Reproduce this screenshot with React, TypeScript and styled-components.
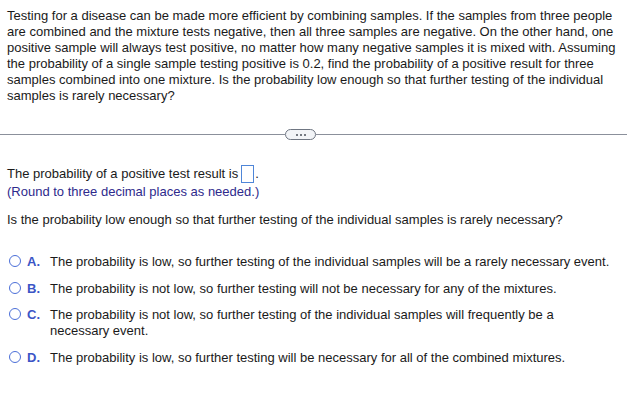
import React from "react";
import styled, { createGlobalStyle } from "styled-components";

const Global = createGlobalStyle`
  html, body { margin: 0; padding: 0; background: #ffffff; }
  body { font-family: "Liberation Sans", Arial, sans-serif; font-size: 13px; color: #1a1a1a; }
`;

const Page = styled.div`
  padding: 8px 7px 0 7px;
  width: 627px;
  box-sizing: border-box;
`;

const Para = styled.p`
  margin: 0;
  line-height: 16px;
  width: 610px;
`;

const DividerRow = styled.div`
  display: flex;
  align-items: center;
  margin: 25px -7px 0 -7px;
  height: 11px;
`;

const Line = styled.div<{ $w?: number }>`
  flex: ${(p) => (p.$w ? `0 0 ${p.$w}px` : "1")};
  height: 1px;
  background: #8b909b;
`;

const Pill = styled.div`
  width: 29px;
  height: 9px;
  border: 1px solid #6f7682;
  border-radius: 6px;
  background: #f2f4f7;
  display: flex;
  align-items: center;
  justify-content: center;
  gap: 2px;
`;

const Dot = styled.span`
  width: 2px;
  height: 2px;
  background: #4a505a;
  border-radius: 1px;
`;

const AnswerLine = styled.div`
  margin-top: 25px;
  display: flex;
  align-items: center;
  line-height: 16px;
`;

const InputBox = styled.span`
  display: inline-block;
  width: 11px;
  height: 16px;
  border: 1px solid #4f86d8;
  margin: 0 1px 0 3px;
`;

const Hint = styled.div`
  color: #2e2a8c;
  line-height: 16px;
  margin-top: 1px;
`;

const Question = styled.div`
  margin-top: 12px;
  line-height: 16px;
`;

const Options = styled.div`
  margin-top: 26px;
  display: flex;
  flex-direction: column;
  gap: 10.6px;
`;

const Option = styled.div`
  display: grid;
  grid-template-columns: 18px 23px 1fr;
  align-items: start;
  line-height: 16px;
  padding-left: 2px;
`;

const Radio = styled.span`
  width: 10px;
  height: 10px;
  border: 1.3px solid #4b6fd8;
  border-radius: 50%;
  margin-top: 1px;
`;

const Letter = styled.span`
  font-weight: bold;
  color: #3b55c6;
`;

const OptionText = styled.span`
  max-width: 562px;
`;

const options: [string, string][] = [
  ["A.", "The probability is low, so further testing of the individual samples will be a rarely necessary event."],
  ["B.", "The probability is not low, so further testing will not be necessary for any of the mixtures."],
  ["C.", "The probability is not low, so further testing of the individual samples will frequently be a necessary event."],
  ["D.", "The probability is low, so further testing will be necessary for all of the combined mixtures."],
];

export default function App() {
  return (
    <>
      <Global />
      <Page>
        <Para>
          Testing for a disease can be made more efficient by combining samples. If the samples from three people
          are combined and the mixture tests negative, then all three samples are negative. On the other hand, one
          positive sample will always test positive, no matter how many negative samples it is mixed with. Assuming
          the probability of a single sample testing positive is 0.2, find the probability of a positive result for three
          samples combined into one mixture. Is the probability low enough so that further testing of the individual
          samples is rarely necessary?
        </Para>
        <DividerRow>
          <Line $w={285} />
          <Pill>
            <Dot />
            <Dot />
            <Dot />
          </Pill>
          <Line />
        </DividerRow>
        <AnswerLine>
          The probability of a positive test result is
          <InputBox />.
        </AnswerLine>
        <Hint>(Round to three decimal places as needed.)</Hint>
        <Question>Is the probability low enough so that further testing of the individual samples is rarely necessary?</Question>
        <Options>
          {options.map(([l, t]) => (
            <Option key={l}>
              <Radio />
              <Letter>{l}</Letter>
              <OptionText>{t}</OptionText>
            </Option>
          ))}
        </Options>
      </Page>
    </>
  );
}
